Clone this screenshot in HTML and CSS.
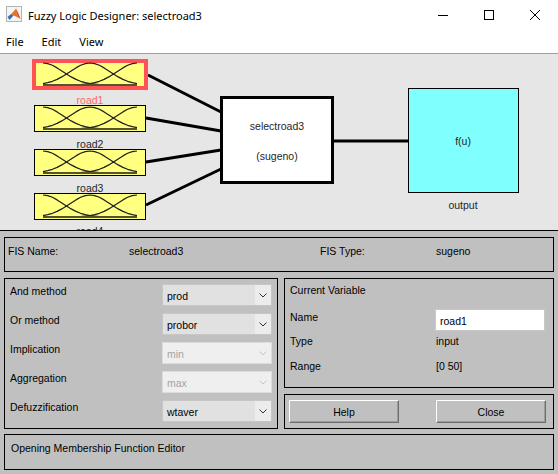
FILE: index.html
```html
<!DOCTYPE html>
<html lang="en">
<head>
  <meta charset="UTF-8">
  <meta name="viewport" content="width=device-width, initial-scale=1.0">
  <title>Fuzzy Logic Designer: selectroad3</title>
  <link rel="stylesheet" href="styles.css">
</head>
<body>
  <div class="window">
    <div class="titlebar">
      <svg class="app-icon" width="16" height="16" viewBox="0 0 16 16">
        <rect x="0.5" y="0.5" width="15" height="15" fill="#f4f4f4" stroke="#b4b4b4"/>
        <path d="M1.5 11 L5 8 L7.5 9.5 L3.5 14 Z" fill="#3a6db5"/>
        <path d="M5 8 L8 5 L10 2.5 L12 7 L14.5 13 L11 11 L7.5 9.5 Z" fill="#e8712c"/>
        <path d="M10 2.5 L12 7 L14.5 13 L12.5 10 Z" fill="#b9321b"/>
      </svg>
      <span class="title">Fuzzy Logic Designer: selectroad3</span>
      <div class="window-controls">
        <span class="win-btn">
          <svg width="10" height="10" viewBox="0 0 10 10"><line x1="0" y1="5.5" x2="10" y2="5.5" stroke="#000"/></svg>
        </span>
        <span class="win-btn">
          <svg width="10" height="10" viewBox="0 0 10 10"><rect x="0.5" y="0.5" width="9" height="9" fill="none" stroke="#000"/></svg>
        </span>
        <span class="win-btn">
          <svg width="10" height="10" viewBox="0 0 10 10"><path d="M0 0 L10 10 M10 0 L0 10" stroke="#000"/></svg>
        </span>
      </div>
    </div>

    <div class="menubar">
      <span>File</span>
      <span>Edit</span>
      <span>View</span>
    </div>

    <div class="diagram">
      <svg width="558" height="176" viewBox="0 0 558 176">
        <defs>
          <g id="mf" fill="none" stroke="#1e1e1e" stroke-width="1.2" stroke-linejoin="round">
            <polyline points="9,2 13.7,2.6 18.4,4.3 23.1,6.9 27.8,9.9 32.5,13 37.2,15.9 41.9,18.4 46.6,20.3 51.3,21.7 56,22.6 65.4,23.6 74.8,23.9 84.2,24 103,24"/>
            <polyline points="9,22.6 13.7,21.7 18.4,20.3 23.1,18.4 27.8,15.9 32.5,13 37.2,9.9 41.9,6.9 46.6,4.3 51.3,2.6 56,2 60.7,2.6 65.4,4.3 70.1,6.9 74.8,9.9 79.5,13 84.2,15.9 88.9,18.4 93.6,20.3 98.3,21.7 103,22.6"/>
            <polyline points="9,24 27.8,24 37.2,23.9 46.6,23.6 56,22.6 60.7,21.7 65.4,20.3 70.1,18.4 74.8,15.9 79.5,13 84.2,9.9 88.9,6.9 93.6,4.3 98.3,2.6 103,2"/>
            <line x1="9" y1="24" x2="103" y2="24" stroke="#55552a" stroke-width="2"/>
          </g>
        </defs>

        <!-- rule lines -->
        <g stroke="#000" stroke-width="3">
          <line x1="148" y1="21" x2="221" y2="58"/>
          <line x1="146" y1="64" x2="221" y2="77"/>
          <line x1="146" y1="108" x2="221" y2="96"/>
          <line x1="146" y1="151" x2="221" y2="115"/>
          <line x1="334" y1="87" x2="408" y2="87"/>
        </g>

        <!-- inputs -->
        <rect x="34" y="7" width="112" height="27" fill="#ffff80" stroke="#ff5252" stroke-width="4"/>
        <use href="#mf" transform="translate(34,7)"/>
        <text class="label selected" x="90" y="50">road1</text>

        <rect x="34.5" y="51.5" width="111" height="26" fill="#ffff80" stroke="#000"/>
        <use href="#mf" transform="translate(34,51)"/>
        <text class="label" x="90" y="94">road2</text>

        <rect x="34.5" y="95.5" width="111" height="26" fill="#ffff80" stroke="#000"/>
        <use href="#mf" transform="translate(34,95)"/>
        <text class="label" x="90" y="138">road3</text>

        <rect x="34.5" y="139.5" width="111" height="26" fill="#ffff80" stroke="#000"/>
        <use href="#mf" transform="translate(34,139)"/>
        <text class="label" x="90" y="180.5">road4</text>

        <!-- system -->
        <rect x="221.5" y="43.5" width="111" height="85" fill="#fff" stroke="#000" stroke-width="3"/>
        <text class="label" x="277" y="76">selectroad3</text>
        <text class="label" x="277" y="106">(sugeno)</text>

        <!-- output -->
        <rect x="408.5" y="34.5" width="110" height="104" fill="#80ffff" stroke="#000"/>
        <text class="label" x="463" y="90.5">f(u)</text>
        <text class="label" x="463" y="155">output</text>
      </svg>
    </div>

    <div class="controls">
      <div class="panel fis-info">
        <span>FIS Name:</span>
        <span>selectroad3</span>
        <span>FIS Type:</span>
        <span>sugeno</span>
      </div>

      <div class="middle">
        <div class="panel methods">
          <div class="method-row">
            <span class="method-label">And method</span>
            <div class="select">
              <span class="select-value">prod</span>
              <span class="select-arrow"><svg width="8" height="5" viewBox="0 0 8 5"><polyline points="0.5,0.5 4,4 7.5,0.5" fill="none" stroke="#333"/></svg></span>
            </div>
          </div>
          <div class="method-row">
            <span class="method-label">Or method</span>
            <div class="select">
              <span class="select-value">probor</span>
              <span class="select-arrow"><svg width="8" height="5" viewBox="0 0 8 5"><polyline points="0.5,0.5 4,4 7.5,0.5" fill="none" stroke="#333"/></svg></span>
            </div>
          </div>
          <div class="method-row">
            <span class="method-label">Implication</span>
            <div class="select disabled">
              <span class="select-value">min</span>
              <span class="select-arrow"><svg width="8" height="5" viewBox="0 0 8 5"><polyline points="0.5,0.5 4,4 7.5,0.5" fill="none" stroke="#c4c4c4"/></svg></span>
            </div>
          </div>
          <div class="method-row">
            <span class="method-label">Aggregation</span>
            <div class="select disabled">
              <span class="select-value">max</span>
              <span class="select-arrow"><svg width="8" height="5" viewBox="0 0 8 5"><polyline points="0.5,0.5 4,4 7.5,0.5" fill="none" stroke="#c4c4c4"/></svg></span>
            </div>
          </div>
          <div class="method-row">
            <span class="method-label">Defuzzification</span>
            <div class="select">
              <span class="select-value">wtaver</span>
              <span class="select-arrow"><svg width="8" height="5" viewBox="0 0 8 5"><polyline points="0.5,0.5 4,4 7.5,0.5" fill="none" stroke="#333"/></svg></span>
            </div>
          </div>
        </div>

        <div class="side">
          <div class="panel current-var">
            <div class="cv-title">Current Variable</div>
            <div class="cv-grid">
              <span class="cv-label name-label">Name</span>
              <div class="text-field">road1</div>
              <span class="cv-label">Type</span>
              <span class="cv-value">input</span>
              <span class="cv-label">Range</span>
              <span class="cv-value">[0 50]</span>
            </div>
          </div>
          <div class="panel actions">
            <button class="btn">Help</button>
            <button class="btn">Close</button>
          </div>
        </div>
      </div>

      <div class="panel status">Opening Membership Function Editor</div>
    </div>
  </div>
</body>
</html>
```

FILE: styles.css
```css
* {
  box-sizing: border-box;
  margin: 0;
  padding: 0;
}

body {
  width: 558px;
  height: 474px;
  overflow: hidden;
  background-color: #c0c0c0;
  font-family: "Liberation Sans", Arial, sans-serif;
  font-size: 10.5px;
  color: #000;
}

.window {
  width: 558px;
  height: 474px;
  display: flex;
  flex-direction: column;
}

/* title bar */
.titlebar {
  height: 30px;
  display: flex;
  align-items: center;
  background-color: #fff;
}

.app-icon {
  margin-left: 6px;
  margin-top: -3px;
}

.title {
  margin-left: 6px;
  font-family: "Noto Sans", "Open Sans", sans-serif;
  font-size: 11px;
  color: #000;
}

.window-controls {
  margin-left: auto;
  display: flex;
}

.win-btn {
  width: 46px;
  height: 30px;
  display: flex;
  align-items: center;
  justify-content: center;
}

/* menu */
.menubar {
  height: 24px;
  display: flex;
  align-items: center;
  gap: 18px;
  padding-left: 6px;
  background-color: #fff;
  border-bottom: 1px solid #a0a0a0;
  font-family: "Noto Sans", "Open Sans", sans-serif;
  font-size: 11px;
}

/* diagram */
.diagram {
  height: 177px;
  background-color: #e6e6e6;
  border-bottom: 1px solid #000;
  overflow: hidden;
}

.diagram svg {
  display: block;
}

.diagram .label {
  font-family: "Liberation Sans", Arial, sans-serif;
  font-size: 10.5px;
  fill: #262626;
  text-anchor: middle;
}

.diagram .label.selected {
  fill: #ff6a6a;
}

/* lower panels */
.controls {
  flex: 1;
  display: flex;
  flex-direction: column;
  padding: 6px 4px 4px 4px;
  background-color: #c0c0c0;
}

.panel {
  border: 1px solid #000;
  line-height: 13px;
}

.fis-info {
  height: 35px;
  display: grid;
  grid-template-columns: 121px 191px 116px 1fr;
  padding: 7px 0 0 3px;
}

.middle {
  height: 151px;
  margin-top: 6px;
  display: flex;
  gap: 6px;
}

.methods {
  width: 274px;
  display: flex;
  flex-direction: column;
  gap: 7px;
  padding: 5px 5px 6px 5px;
}

.method-row {
  height: 22px;
  display: flex;
  justify-content: space-between;
  align-items: flex-start;
}

.method-label {
  line-height: 14px;
}

.select {
  width: 110px;
  height: 22px;
  display: flex;
  background-color: #e1e1e1;
  border: 1px solid #c6c6c6;
}

.select-value {
  flex: 1;
  display: flex;
  align-items: center;
  padding: 2px 0 0 4px;
}

.select-arrow {
  width: 16px;
  display: flex;
  align-items: center;
  justify-content: center;
  background-color: #ececec;
}

.select.disabled {
  background-color: #efefef;
  border-color: #dcdcdc;
  color: #a3a3a3;
}

.select.disabled .select-arrow {
  background-color: #efefef;
}

.side {
  width: 270px;
  display: flex;
  flex-direction: column;
  gap: 6px;
}

.current-var {
  height: 110px;
  padding: 5px 7px 0 5px;
}

.cv-grid {
  margin-top: 12px;
  display: grid;
  grid-template-columns: 145px 110px;
  grid-template-rows: 22px 25px 25px;
}

.cv-label {
  padding-top: 3.5px;
}

.cv-label.name-label {
  padding-top: 1.5px;
}

.cv-value {
  padding: 3.5px 0 0 1px;
}

.text-field {
  display: flex;
  align-items: center;
  padding: 2px 0 0 4px;
  background-color: #fff;
  border: 1px solid #c8c8c8;
}

.actions {
  height: 35px;
  display: flex;
  justify-content: space-between;
  padding: 5px 7px 0 4px;
}

.btn {
  width: 110px;
  height: 23px;
  background-color: #c0c0c0;
  border: 1px solid;
  border-color: #fff #6e6e6e #6e6e6e #fff;
  box-shadow: inset -1px -1px 0 #9c9c9c;
  font-family: "Liberation Sans", Arial, sans-serif;
  font-size: 10.5px;
  color: #000;
}

.status {
  height: 36px;
  margin-top: 5px;
  padding: 7px 0 0 6px;
}
```
